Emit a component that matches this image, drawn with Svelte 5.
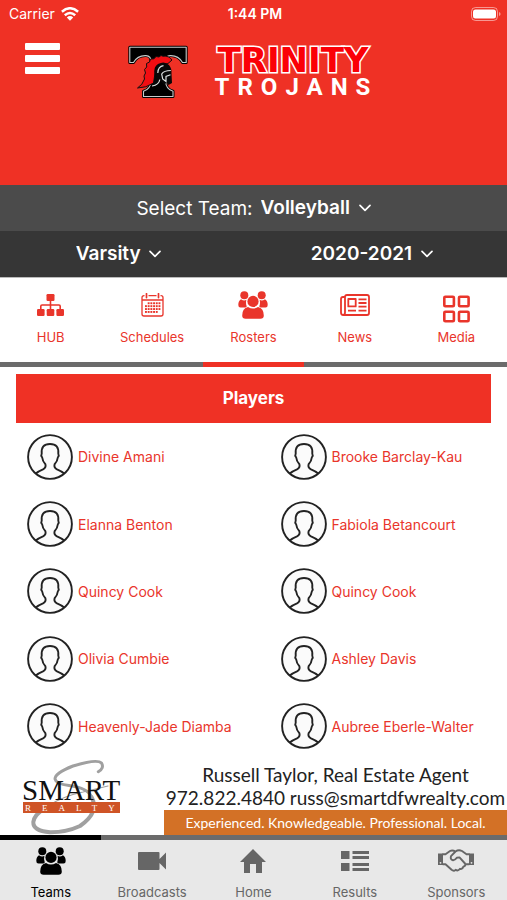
<script>
  const tabs = [
    { label: 'HUB', icon: 'hub' },
    { label: 'Schedules', icon: 'calendar' },
    { label: 'Rosters', icon: 'people' },
    { label: 'News', icon: 'news' },
    { label: 'Media', icon: 'media' }
  ];
  const nav = [
    { label: 'Teams', icon: 'people' },
    { label: 'Broadcasts', icon: 'video' },
    { label: 'Home', icon: 'home' },
    { label: 'Results', icon: 'results' },
    { label: 'Sponsors', icon: 'hands' }
  ];
  const players = [
    'Divine Amani', 'Brooke Barclay-Kau',
    'Elanna Benton', 'Fabiola Betancourt',
    'Quincy Cook', 'Quincy Cook',
    'Olivia Cumbie', 'Ashley Davis',
    'Heavenly-Jade Diamba', 'Aubree Eberle-Walter'
  ];
  const dots = [];
  for (let r = 0; r < 4; r++) for (let c = 0; c < 6; c++) if (!(r === 0 && c === 0) && !(r === 3 && c === 5)) dots.push([4 + c * 2.7, 9.3 + r * 2.9]);

  let activeTab = $state('Rosters');
  let activeNav = $state('Teams');
</script>

{#snippet chevron()}
  <svg class="chevron" width="12" height="8" viewBox="0 0 12 8" aria-hidden="true"><path d="M1 1.3 6 6.3 11 1.3" fill="none" stroke="#fff" stroke-width="1.7" stroke-linecap="round" stroke-linejoin="round" /></svg>
{/snippet}

{#snippet icon(name)}
  {#if name === 'hub'}
    <svg width="27" height="24" viewBox="0 0 27 24"><g fill="currentColor"><rect x="9.5" y="1" width="8" height="7" rx="1.2" /><rect x="0" y="16" width="7.6" height="7" rx="1.2" /><rect x="9.7" y="16" width="7.6" height="7" rx="1.2" /><rect x="19.4" y="16" width="7.6" height="7" rx="1.2" /></g><path d="M13.5 7V17M3.8 17V13.3Q3.8 12 5 12H22Q23.2 12 23.2 13.3V17" fill="none" stroke="currentColor" stroke-width="1.6" /></svg>
  {:else if name === 'calendar'}
    <svg width="23" height="24" viewBox="0 0 23 24"><path d="M3.5 2.7H3Q1 2.7 1 4.7V21Q1 23 3 23H20Q22 23 22 21V4.7Q22 2.7 20 2.7H19.5M7.5 2.7H15.5M1 7H22" fill="none" stroke="currentColor" stroke-width="1.3" /><path d="M5.5.7V4.6M17.5.7V4.6" stroke="currentColor" stroke-width="1.7" stroke-linecap="round" /><g fill="currentColor">{#each dots as d}<rect x={d[0]} y={d[1]} width="1.9" height="1.9" />{/each}</g></svg>
  {:else if name === 'people'}
    <svg width="30" height="28" viewBox="0 0 30 28"><g fill="currentColor"><circle cx="6.3" cy="4.3" r="4" /><circle cx="23.7" cy="4.3" r="4" /><path d="M3 8.2Q6 10.4 8.4 8.8Q7.4 12.5 8.8 15.6L7.5 16.6H2.5Q.3 16.6 .3 14Q.3 9.6 3 8.2ZM27 8.2Q24 10.4 21.6 8.8Q22.6 12.5 21.2 15.6L22.5 16.6H27.5Q29.7 16.6 29.7 14Q29.7 9.6 27 8.2Z" /><circle cx="15" cy="10.4" r="5.6" /><path d="M10 16Q15 19 20 16Q25.8 17.3 25.8 24.5Q25.8 27.8 22.4 27.8H7.6Q4.2 27.8 4.2 24.5Q4.2 17.3 10 16Z" /></g></svg>
  {:else if name === 'news'}
    <svg width="30" height="22" viewBox="0 0 30 22"><g fill="none" stroke="currentColor" stroke-width="1.8" stroke-linejoin="round"><path d="M5 3H3Q1 3 1 5V18.5Q1 21 3.2 21H27Q29 21 29 19V3Q29 1 27 1H7Q5 1 5 3V18.5Q5 21 3 21" /><rect x="8.3" y="5" width="7.4" height="7.4" /><path d="M18.5 5.3H26.5M18.5 9H26.5M18.5 12.6H26.5M8 16.6H16M18.5 16.6H26.5" /></g></svg>
  {:else if name === 'media'}
    <svg class="low" width="28" height="28" viewBox="0 0 28 28"><g fill="none" stroke="currentColor" stroke-width="2.6"><rect x="2.3" y="1.7" width="9.6" height="9.6" rx="1" /><rect x="17" y="1.7" width="9.6" height="9.6" rx="1" /><rect x="2.3" y="16.7" width="9.6" height="9.6" rx="1" /><rect x="17" y="16.7" width="9.6" height="9.6" rx="1" /></g></svg>
  {:else if name === 'video'}
    <svg width="28" height="20" viewBox="0 0 28 20"><path d="M1 1H20.5Q21.5 1 21.5 2V8L28 1.5V18.5L21.5 12V18Q21.5 19 20.5 19H1Q0 19 0 18V2Q0 1 1 1Z" fill="currentColor" /></svg>
  {:else if name === 'home'}
    <svg width="26" height="24" viewBox="0 0 26 24"><path d="M13 0 26 13H22V24H16V15H10V24H4V13H0Z" fill="currentColor" /></svg>
  {:else if name === 'results'}
    <svg width="28" height="20" viewBox="0 0 28 20"><path d="M0 0H8.5V8H0ZM0 12H8.5V20H0ZM11.5 0H28V3H11.5ZM11.5 5H28V8H11.5ZM11.5 12H28V15H11.5ZM11.5 17H28V20H11.5Z" fill="currentColor" /></svg>
  {:else if name === 'hands'}
    <svg width="36" height="24" viewBox="0 0 36 24"><path d="M0 4.5H5V16H0ZM31 4.5H36V16H31Z" fill="currentColor" /><circle cx="2.5" cy="13.8" r=".9" fill="#e8e8e8" /><circle cx="33.5" cy="13.8" r=".9" fill="#e8e8e8" /><g fill="none" stroke="currentColor" stroke-width="1.9" stroke-linejoin="round" stroke-linecap="round"><path d="M5 5.2H7.5L12 2Q14.5.8 17.5 2.5M31 5.2H28.5L24 2Q20.5.4 17.5 2.5L13 7.2Q12 10.6 15 11.2Q17 11.4 18.8 8.8L21.5 8.4L27 14.5Q28 17 25.4 17.6Q24.6 20.5 22 19.8Q20 22.5 17.6 20.8Q15.8 22.6 13.6 20.8L7.5 15.2H5M31 15.2H27.3" /></g></svg>
  {/if}
{/snippet}

<div class="app">
  <header>
    <div class="status">
      <span class="carrier">Carrier
        <svg width="18" height="14" viewBox="0 0 18 14" aria-hidden="true"><g fill="none" stroke="#fff" stroke-width="2.5"><path d="M.9 4.7Q9-2.2 17.1 4.7M3.8 8.2Q9 3.7 14.2 8.2" /></g><path d="M5.8 10.4Q9 7.8 12.2 10.4L9 13.8Z" fill="#fff" /></svg>
      </span>
      <span class="time">1:44 PM</span>
      <svg class="battery" width="30" height="14" viewBox="0 0 30 14" aria-hidden="true"><rect x=".5" y=".5" width="26" height="13" rx="4" fill="none" stroke="#fff" stroke-opacity=".5" /><rect x="2" y="2.5" width="23" height="9" rx="2.5" fill="#fff" /><path d="M28 5Q29.6 5.5 29.6 7T28 9Z" fill="#fff" fill-opacity=".5" /></svg>
    </div>
    <div class="brand-row">
      <button class="menu" aria-label="Menu"><span></span><span></span><span></span></button>
      <div class="brand">
        <svg width="60" height="54" viewBox="0 0 60 54" aria-hidden="true">
          <g stroke-linejoin="round">
            <path d="M1.8 2.3H58.2V17.5H54.5Q50.5 10.2 42 10.6Q37.5 11 37.5 16V36Q38 44.5 45 46.2V51.5H15.5V46.2Q22.5 44.5 23 36V16Q23 11 18 10.6Q9.5 10.2 5.5 17.5H1.8Z" fill="#000" stroke="#000" stroke-width="3" />
            <path d="M1.8 2.3H58.2V17.5H54.5Q50.5 10.2 42 10.6Q37.5 11 37.5 16V36Q38 44.5 45 46.2V51.5H15.5V46.2Q22.5 44.5 23 36V16Q23 11 18 10.6Q9.5 10.2 5.5 17.5H1.8Z" fill="#000" stroke="#c5caca" stroke-width="1.1" />
          </g>
          <path d="M44 15Q41 10.5 35 11.2L33 10.5L31 12L28 11.5L26 13.8L22.5 14L21.5 17L18.5 18.5L18.7 22L16.5 24.5L17.5 28L16 31L16.5 34Q14.5 40 9.5 43Q18 43 25.5 38L28 22L40 18.5Z" fill="#f20d12" stroke="#111" stroke-width="1" />
          <path d="M23.5 41Q27.5 36 26.5 29Q25.3 22 30 19Q36.5 15.5 41 20Q44 23.5 43.5 29L44 38L40.5 40L38.5 37.5L36 40Q33 35.5 31.5 34.5Q29.5 39.5 23.5 41Z" fill="#080808" />
          <path d="M29.8 28Q30 21.5 35.5 20.7M42.8 25.5Q36 25.5 33.7 29L34.7 34L38 36.5V31.5L42.5 29.8M24 41Q31 40 31.8 34.5" fill="none" stroke="#dde2e2" stroke-width="1.2" />
        </svg>
        <div class="wordmark">
          <span class="trinity">TRINITY</span>
          <span class="trojans">TROJANS</span>
        </div>
      </div>
    </div>
  </header>

  <div class="filter team">
    <label for="team">Select Team:</label>
    <span class="pick"><select id="team"><option>Volleyball</option></select>{@render chevron()}</span>
  </div>
  <div class="filter pair">
    <span class="pick"><select aria-label="Level"><option>Varsity</option></select>{@render chevron()}</span>
    <span class="pick"><select aria-label="Season"><option>2020-2021</option></select>{@render chevron()}</span>
  </div>

  <nav class="tabs" aria-label="Team sections">
    {#each tabs as t}
      <button class:active={activeTab === t.label} onclick={() => (activeTab = t.label)}>
        <span class="glyph">{@render icon(t.icon)}</span>
        <span>{t.label}</span>
      </button>
    {/each}
  </nav>

  <main>
    <h2>Players</h2>
    <ul>
      {#each players as p}
        <li>
          <a href="#player">
            <svg width="46" height="46" viewBox="0 0 46 46" aria-hidden="true"><g fill="#fbfbfb" stroke="#222" stroke-width="1.9"><circle cx="23" cy="23" r="21.9" /><path d="M8.8 39.5Q11 37.4 16 35.3Q19.4 33.5 18.4 30.2Q15.6 27.5 15.2 23.5Q13.6 21.6 14.7 19.8Q13.8 10 23 10T31.3 19.8Q32.4 21.6 30.8 23.5Q30.4 27.5 27.6 30.2Q26.6 33.5 30 35.3Q35 37.4 37.2 39.5" fill="none" stroke-linejoin="round" /></g></svg>
            <span>{p}</span>
          </a>
        </li>
      {/each}
    </ul>
  </main>

  <aside class="ad">
    <svg class="realty" width="102" height="75" viewBox="0 0 102 75" role="img" aria-label="Smart Realty">
      <g fill="none" stroke="#a0a0a0" stroke-linecap="round" stroke-linejoin="round">
        <path d="M77.3 11.7Q83.5 8 80.5 3Q76-1.5 52 6Q34 13 34 19Q35 24 48 25.5Q67 28 70.5 37" stroke-width="3" />
        <path d="M70.5 37Q79 52 59 66Q45 72.5 29 72.3Q12 71 12.3 62Q13 55 25 47" stroke-width="4" />
        <path d="M25 47Q42 36 62 32L87 26" stroke-width="1.2" />
      </g>
      <rect x="2" y="42" width="97" height="11" fill="#cf5426" />
      <text x="1" y="40" class="smart">SMART</text>
      <text x="4" y="51" class="small">REALTY</text>
    </svg>
    <div class="agent">
      <p>Russell Taylor, Real Estate Agent</p>
      <p>972.822.4840 russ@smartdfwrealty.com</p>
      <p class="tagline">Experienced. Knowledgeable. Professional. Local.</p>
    </div>
  </aside>

  <nav class="bottom" aria-label="Main">
    {#each nav as n}
      <button class:active={activeNav === n.label} onclick={() => (activeNav = n.label)}>
        <span class="glyph">{@render icon(n.icon)}</span>
        <span>{n.label}</span>
      </button>
    {/each}
  </nav>
</div>

<style>
  :global(body) { background: #fff; }
  .app {
    min-height: 100vh;
    display: flex;
    flex-direction: column;
    font-family: Inter, "Liberation Sans", sans-serif;
  }
  svg { display: block; flex: none; }
  button, select { font: inherit; border: 0; background: none; padding: 0; margin: 0; color: inherit; }

  header { height: 185px; background: #ef3125; color: #fff; }
  .status {
    display: grid;
    grid-template-columns: 1fr auto 1fr;
    align-items: center;
    height: 27px;
    padding: 0 6px 0 9px;
    font-size: 14px;
  }
  .carrier { display: flex; align-items: center; gap: 6px; }
  .time { font-weight: 600; }
  .battery { justify-self: end; }

  .brand-row { display: grid; grid-template-columns: 128px 1fr; padding-top: 16px; }
  .menu { display: flex; flex-direction: column; gap: 5px; width: 35px; margin-left: 25px; align-self: start; }
  .menu span { display: block; height: 7px; border-radius: 1px; background: #fff; }
  .brand { display: flex; gap: 8px; padding-top: 2px; }
  .wordmark { display: flex; flex-direction: column; align-items: center; width: 194px; }
  .trinity {
    font: bold 34px/30px "DejaVu Sans", sans-serif;
    color: #fb0007;
    -webkit-text-stroke: 3px #fff;
    paint-order: stroke fill;
  }
  .trojans { font: bold 24px/24px Roboto, sans-serif; letter-spacing: 8px; padding-left: 7px; }

  .filter {
    display: flex;
    align-items: center;
    justify-content: center;
    height: 46px;
    background: #4b4b4b;
    color: #fff;
    font-size: 19px;
  }
  .team { gap: 8px; }
  .pair { background: #363636; display: grid; grid-template-columns: 1fr 1fr; justify-items: center; }
  .pair .pick { margin-right: 17px; }
  .pick { display: flex; align-items: center; gap: 8px; }
  select { appearance: none; font-weight: 600; line-height: 28px; }
  .chevron { pointer-events: none; }

  .tabs, .bottom { display: grid; grid-template-columns: repeat(5, 1fr); }
  .tabs button, .bottom button {
    display: flex;
    flex-direction: column;
    align-items: center;
    font-size: 13px;
    line-height: 16px;
    cursor: pointer;
  }
  .tabs { border-top: 1px solid #bbb; }
  .tabs button { height: 89px; padding-top: 11px; color: #e9352b; border-bottom: 5px solid #6b6b6b; }
  .tabs button.active { border-color: #ef3125; }
  .tabs .glyph { display: flex; align-items: center; height: 32px; margin-bottom: 8px; }
  .low { position: relative; top: 4px; }

  main { flex: 1; display: flex; flex-direction: column; padding-top: 7px; }
  h2 {
    margin: 0 16px;
    background: #ef3125;
    color: #fff;
    font-size: 17px;
    font-weight: 700;
    line-height: 49px;
    text-align: center;
  }
  ul {
    flex: 1;
    display: grid;
    grid-template-columns: 1fr 1fr;
    grid-auto-rows: 1fr;
    list-style: none;
    margin: 0;
    padding: 0;
  }
  li { display: flex; align-items: center; padding-left: 27px; }
  li a { display: flex; align-items: center; gap: 5px; color: #e9352b; font-size: 14px; text-decoration: none; white-space: nowrap; }

  .ad { display: flex; justify-content: space-between; background: #fff; height: 75px; }
  .realty { margin-left: 21px; overflow: visible; }
  .smart { font: 29px "Liberation Serif", serif; fill: #111; }
  .small { font: 9px "Liberation Serif", serif; letter-spacing: 11px; fill: #fff; }
  .agent { display: flex; flex-direction: column; width: 343px; color: #222; }
  .agent p { margin: 0; text-align: center; font: 19px/23px Lato, sans-serif; white-space: nowrap; }
  .agent p:first-child { padding-top: 3px; }
  .agent .tagline { margin-top: 1px; background: #d37126; color: #fff; font-size: 14px; line-height: 25px; }

  .bottom { background: #e8e8e8; }
  .bottom button { height: 65px; color: #666; border-top: 5px solid #6b6b6b; }
  .bottom .glyph { display: flex; align-items: center; height: 28px; margin: 7px 0 9px; }
  .bottom button.active { color: #000; border-color: #000; }
</style>
